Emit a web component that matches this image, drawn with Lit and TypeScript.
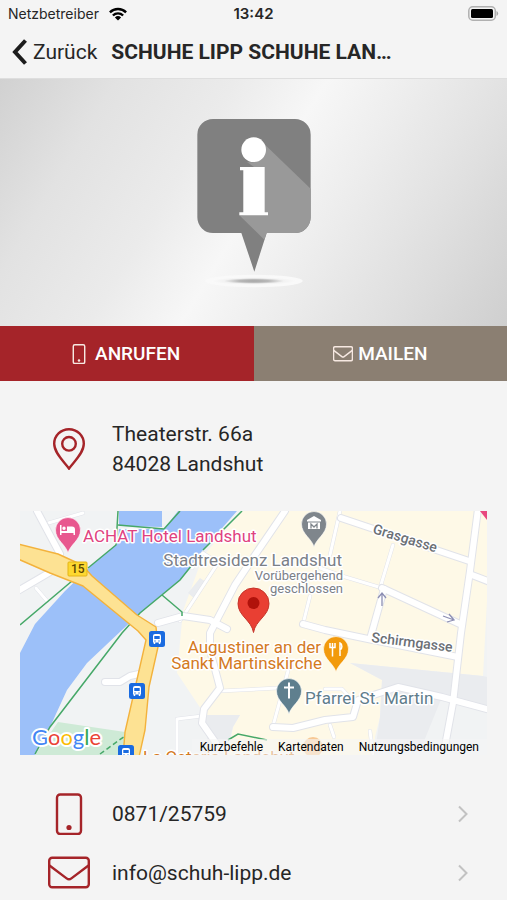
import { LitElement, html, css, svg } from "lit";
import { customElement } from "lit/decorators.js";

const phoneIcon = html`<svg class="icon" viewBox="0 0 42 42" aria-hidden="true">
  <rect x="9" y="1.5" width="24" height="39.5" rx="3.2" />
  <circle class="dot" cx="21" cy="34.5" r="2.6" />
</svg>`;

const mailIcon = html`<svg class="icon" viewBox="0 0 42 42" aria-hidden="true">
  <rect x="1.2" y="5.8" width="39.6" height="29.4" rx="3" />
  <path d="M1.5 13.5L18.6 26.400a4 4 0 0 0 4.800 0L40.5 13.5" />
</svg>`;

const pinIcon = html`<svg class="icon" viewBox="0 0 42 42" aria-hidden="true">
  <path d="M21 40.6C17 34.5 6.2 25.5 6.2 15.8a14.8 14.6 0 0 1 29.6 0C35.8 25.5 25 34.5 21 40.6Z" />
  <circle cx="21" cy="15.8" r="6.8" />
</svg>`;

@customElement("street-map")
export class StreetMap extends LitElement {
  static styles = css`
    :host {
      display: block;
      position: relative;
      overflow: hidden;
      background: #f1f3f4;
    }
    .canvas {
      display: block;
      width: 100%;
      height: auto;
      font-family: Roboto, sans-serif;
    }
    .river { fill: #9cc0f9; }
    .town { fill: #fef9e7; }
    .block { fill: #eaecef; }
    .park { fill: #ceead6; }
    .trail { fill: none; stroke: #46a868; stroke-width: 1.5; }
    .dashed { stroke-dasharray: 5 3; }
    .edge, .road { fill: none; stroke-linejoin: round; stroke-linecap: round; }
    .edge { stroke: #e1e3e9; }
    .road { stroke: #ffffff; }
    .wide .edge { stroke-width: 8; }
    .wide .road { stroke-width: 6; }
    .thin .edge { stroke-width: 4; }
    .thin .road { stroke-width: 3; }
    .highway { fill: #fde293; stroke: #f3b23c; stroke-width: 1.4; stroke-linejoin: round; }
    .arrow { fill: none; stroke: #8d8fb3; stroke-width: 1.3; }
    .shield { fill: #fdd831; stroke: #e4b416; }
    .label {
      font-size: 17px;
      paint-order: stroke;
      stroke: #ffffff;
      stroke-width: 3px;
      stroke-linejoin: round;
    }
    .small { font-size: 13px; }
    .street { font-size: 14px; font-weight: 500; fill: #6b6f75; }
    .num { font-size: 12px; font-weight: 500; fill: #5b4500; }
    .hotel { fill: #e0427f; }
    .museum { fill: #7b8087; }
    .food { fill: #d47a1f; }
    .church { fill: #5f7d8c; }
    .end { text-anchor: end; }
    .brand { font-family: Lato, sans-serif; font-size: 22px; stroke-width: 4px; }
    .g-blue { fill: #4285f4; }
    .g-red { fill: #ea4335; }
    .g-yellow { fill: #fbbc05; }
    .g-green { fill: #34a853; }
    .legal {
      position: absolute;
      right: 0;
      bottom: 0;
      display: flex;
      gap: 15px;
      padding: 1px 8px;
      background: rgba(245, 245, 245, 0.6);
      font: 12px/14px Roboto, sans-serif;
    }
    .legal button, .legal a, .legal span {
      padding: 0;
      border: 0;
      background: none;
      font: inherit;
      color: #000000;
      text-decoration: none;
    }
  `;

  private roads(kind: string, paths: string[]) {
    return svg`<g class=${kind}>
      ${paths.map((d) => svg`<path class="edge" d=${d} />`)}
      ${paths.map((d) => svg`<path class="road" d=${d} />`)}
    </g>`;
  }

  private bus(x: number, y: number) {
    return svg`<g transform="translate(${x} ${y})">
      <rect width="16" height="16" rx="2.5" fill="#1a6be0" />
      <path fill="#fff" d="M4 5a2 2 0 0 1 2-2h4a2 2 0 0 1 2 2v6.5h-.7V13H9.800v-1.500H6.200V13H4.700v-1.500H4Z" />
      <path fill="#1a6be0" d="M5.300 5h5.400v3H5.300ZM5.300 9.400h1.400v1H5.300ZM9.300 9.400h1.400v1H9.300Z" />
    </g>`;
  }

  private pin(x: number, y: number, color: string, glyph: unknown) {
    return svg`<g transform="translate(${x} ${y})">
      <path fill=${color} stroke="#fff" stroke-width=".6"
        d="M0 0C-1.800-8-12.500-13-12.500-23a12.500 12.500 0 0 1 25 0C12.500-13 1.800-8 0 0Z" />
      ${glyph}
    </g>`;
  }

  render() {
    return html`
      <svg class="canvas" viewBox="0 0 467 244" role="img" aria-label="Karte Landshut">
        <path class="river" d="M104 0H142V16L99 15V0ZM158 0L144 18H99L97 33 72 54 45 80 15 113 0 142V244H15L30 216 47 179 67 152 102 119 118 104 140 85 160 69 170 57 183 39 217 0Z" />
        <path class="town" d="M222 0H467V90L463 165 330 152 362 169 360 206 355 226V244H208L213 216 220 204H185L157 162 163 100 183 45Z" />
        <path class="block" d="M330 152L463 165 467 166V196L422 186 400 240H355L360 206 362 169ZM168 82l12-15 6 4-10 18zM185 204h35l-7 12-5 18h-20z" />
        <path class="park" d="M38 211L105 221 104 244H15Z" />
        ${this.roads("thin", [
          "M25 13L63 2",
          "M16 77L27 90",
          "M320 0L310 44",
          "M373 34L360 77",
          "M300 57L322 65 362 77",
          "M200 180L258 177",
          "M268 160L253 215",
          "M157 244V208L182 205",
          "M305 178H322L335 192",
          "M350 220L353 244",
          "M172 57L183 42 198 52 160 110",
          "M283 113L290 85",
          "M310 214L314 226",
        ])}
        ${this.roads("wide", [
          "M17 0L40 43",
          "M-4 81L32 60",
          "M138 112L163 105 190 109 207 118",
          "M265 0L235 44 215 74 190 122 190 139 200 177 184 198 182 212 196 232",
          "M321 7L449 50",
          "M452 64L470 71",
          "M458-2L450 60 441 122 433 192 425 235",
          "M362 77L442 114",
          "M364 78L350 128",
          "M283 113L305 119 348 128 438 146",
          "M253 216L273 217 305 209 333 206 338 189 378 176 422 186 470 199",
          "M85 171H100L110 165 119 163",
        ])}
        <path class="trail" d="M0 114L52 70M68 57L96 34 98 0M98 14L144 18 160 0M15 243L30 216 102 122 120 102 160 69 172 54M183 39L222 0M142 84L162 101V105M208 229L218 223 247 229" />
        <path class="trail dashed" d="M80 243L105 225" />
        <path class="highway" d="M-2 33L38 43 62 54 72 65 117 104 136 116 138 136 129 176 125 219 119 246H103L105 221 126 129 118 120 63 75 30 62-2 48Z" />
        <path class="arrow" d="M362 95V82M358 87l4-5 4 5M423 105l11 4M429 103l5 6-7 2" />

        <rect class="shield" x="48" y="51" width="19" height="14" rx="1" />
        <text class="num" x="51" y="62">15</text>
        ${this.bus(129, 120)} ${this.bus(109, 172)} ${this.bus(98, 234)}

        ${this.pin(48, 42, "#e8588f", svg`<path fill="#fff" d="M-8-28h1.500v6H-1v-4.500h5a3 3 0 0 1 3 3V-18H5.500v-2h-12v2H-8ZM-4-26.500a1.700 1.700 0 1 1 0 3.400 1.700 1.700 0 0 1 0-3.400Z" />`)}
        ${this.pin(294, 36, "#7f868c", svg`<path fill="#fff" d="M0-31L7-27v1.500H-7V-27ZM-6-24.500H6V-18H-6Z" /><path stroke="#7f868c" fill="none" stroke-width="1.300" d="M-3-18.500v-4.500l3 3 3-3v4.500" />`)}
        ${this.pin(269, 203, "#5f7f8e", svg`<path stroke="#fff" fill="none" stroke-width="2" d="M0-31.500v16M-5-26.500H5" />`)}
        ${this.pin(316, 161, "#f29a0c", svg`<path fill="none" stroke="#fff" stroke-width="1.500" d="M-6-29v4.500h5V-29M-3.500-29v13.500M4-16v-13c2.500 1 2.500 6 0 7" />`)}
        <circle cx="293" cy="236" r="10" fill="#f7c894" />
        <path fill="#e8487f" d="M460 0h7v9Z" />
        <path fill="#e93f33" stroke="#c5352b" d="M233.500 121.500C231.500 109 218 105 218 92.500a15.500 15.500 0 0 1 31 0C249 105 235.500 109 233.500 121.500Z" />
        <circle cx="233.500" cy="92" r="6" fill="#b0120b" />

        <text class="label hotel" x="63" y="31">ACHAT Hotel Landshut</text>
        <text class="label museum end" x="322" y="55">Stadtresidenz Landshut</text>
        <text class="label museum small end" x="323" y="69">Vorübergehend</text>
        <text class="label museum small end" x="323" y="82">geschlossen</text>
        <text class="label food end" x="301" y="142">Augustiner an der</text>
        <text class="label food end" x="302" y="158">Sankt Martinskirche</text>
        <text class="label church" x="285" y="193">Pfarrei St. Martin</text>
        <text class="label food" x="123" y="252">La Osteria Landshut</text>
        <text class="label street" transform="translate(352 22) rotate(17)">Grasgasse</text>
        <text class="label street" transform="translate(351 131) rotate(7)">Schirmgasse</text>
        <text class="label brand" x="12" y="234"><tspan class="g-blue">G</tspan><tspan class="g-red">o</tspan><tspan class="g-yellow">o</tspan><tspan class="g-blue">g</tspan><tspan class="g-green">l</tspan><tspan class="g-red">e</tspan></text>
      </svg>
      <div class="legal">
        <button type="button">Kurzbefehle</button>
        <span>Kartendaten</span>
        <a href="#terms">Nutzungsbedingungen</a>
      </div>
    `;
  }
}

@customElement("app-root")
export class AppRoot extends LitElement {
  static styles = css`
    :host {
      display: block;
      min-height: 100vh;
      background: #f4f4f4;
      color: #262626;
      font: 21px/30px Roboto, sans-serif;
    }
    .status {
      display: grid;
      grid-template-columns: 1fr auto 1fr;
      align-items: center;
      height: 27px;
      padding: 0 8px;
      font: 14px/20px Inter, sans-serif;
    }
    .carrier { display: flex; align-items: center; gap: 10px; }
    .wifi { width: 18px; height: 14px; }
    .time { font-size: 15px; font-weight: 600; }
    .battery { justify-self: end; width: 31px; height: 15px; }
    .nav {
      display: flex;
      align-items: center;
      gap: 14px;
      height: 49px;
      padding: 0 12px 2px;
      border-bottom: 1px solid #dedede;
    }
    .back {
      display: flex;
      align-items: center;
      gap: 6px;
      padding: 0;
      border: 0;
      background: none;
      color: inherit;
      font: inherit;
    }
    .chevron { width: 15px; height: 26px; fill: none; stroke: #1c1c1c; stroke-width: 4; }
    .title { margin: 0; font-size: 21px; font-weight: 700; white-space: nowrap; }
    .hero {
      display: flex;
      justify-content: center;
      align-items: center;
      height: 247px;
      background: linear-gradient(121deg, #d1d1d1 0%, #e2e2e2 18%, #ebebeb 36%, #f7f7f7 50%, #ebebeb 66%, #e0e0e0 80%, #cfcfcf 100%);
    }
    .emblem { width: 150px; height: 200px; }
    .actions { display: grid; grid-template-columns: 1fr 1fr; }
    .action {
      display: flex;
      justify-content: center;
      align-items: center;
      gap: 5px;
      height: 55px;
      color: #ffffff;
      font-size: 19px;
      font-weight: 500;
      text-decoration: none;
    }
    .call { background: #a52429; }
    .mail { background: #8b7f72; }
    .action .icon { width: 20px; height: 20px; stroke: #f7e9e2; stroke-width: 3; }
    .call .icon { margin: 0 -4px; }
    .action .dot { fill: #f7e9e2; }
    .icon { width: 42px; height: 42px; fill: none; stroke: #a52429; stroke-width: 2.4; flex: none; }
    .dot { fill: #a52429; stroke: none; }
    .row {
      display: flex;
      align-items: center;
      gap: 22px;
      padding: 0 38px 0 48px;
      color: inherit;
      text-decoration: none;
    }
    .address { padding-top: 38px; padding-bottom: 32px; font-style: normal; }
    .map { margin: 0 20px; }
    .contacts { display: grid; gap: 5px; padding-top: 32px; }
    .contact { height: 54px; }
    .value { flex: 1; }
    .go { width: 12px; height: 18px; fill: none; stroke: #c2c2c2; stroke-width: 2; }
  `;

  private contacts = [
    { icon: phoneIcon, text: "0871/25759", href: "tel:087125759" },
    { icon: mailIcon, text: "info@schuh-lipp.de", href: "mailto:info@schuh-lipp.de" },
  ];

  render() {
    return html`
      <div class="status">
        <span class="carrier">Netzbetreiber
          <svg class="wifi" viewBox="0 0 18 14" aria-hidden="true">
            <path fill="none" stroke="#000" stroke-width="2.4" d="M.9 5.300a11.500 11.500 0 0 1 16.200 0M3.900 8.500a7.300 7.300 0 0 1 10.200 0" />
            <path d="M9 13.400L5.900 10.500a4.500 4.500 0 0 1 6.200 0Z" />
          </svg>
        </span>
        <span class="time">13:42</span>
        <svg class="battery" viewBox="0 0 31 15" aria-hidden="true">
          <rect x=".8" y=".8" width="26.500" height="13.400" rx="4" fill="none" stroke="#b0b0b0" stroke-width="1.500" />
          <rect x="3" y="3" width="22" height="9" rx="1.500" />
          <path fill="#a8a8a8" d="M28.500 5a2.700 2.700 0 0 1 0 5Z" />
        </svg>
      </div>
      <header class="nav">
        <button class="back" type="button">
          <svg class="chevron" viewBox="0 0 15 26" aria-hidden="true"><path d="M13.500 1.500L3 13l10.500 11.500" /></svg>
          Zurück
        </button>
        <h1 class="title">SCHUHE LIPP SCHUHE LAN…</h1>
      </header>
      <div class="hero">
        <svg class="emblem" viewBox="-3 8 450 600" role="img" aria-label="Information">
          <defs>
            <radialGradient id="shade">
              <stop offset="0" stop-color="#a6a6a6" />
              <stop offset=".35" stop-color="#b8b8b8" />
              <stop offset=".7" stop-color="#f2f2f2" />
              <stop offset="1" stop-color="#fafafa" />
            </radialGradient>
          </defs>
          <ellipse cx="222" cy="542" rx="146" ry="19" fill="#f9f9f9" />
          <ellipse cx="222" cy="542" rx="128" ry="12" fill="url(#shade)" />
          <path fill="#808080" d="M99 56H345a47 47 0 0 1 47 47V351a47 47 0 0 1-47 47H260L223 514 184 398H99a47 47 0 0 1-47-47V103a47 47 0 0 1 47-47Z" />
          <path fill="#999" d="M255 133L392 265V351a47 47 0 0 1-47 47H260L253 418 178 345H190V186H220Z" />
          <path fill="#808080" d="M180 170L222 200H180Z" />
          <circle cx="221" cy="148" r="37" fill="#fff" />
          <path fill="#fff" d="M180 200H254V336H264V345H178V336H190V210H180Z" />
        </svg>
      </div>
      <nav class="actions">
        <a class="action call" href="tel:087125759">${phoneIcon}<span>&nbsp;ANRUFEN</span></a>
        <a class="action mail" href="mailto:info@schuh-lipp.de">${mailIcon}<span>MAILEN</span></a>
      </nav>
      <address class="row address">
        ${pinIcon}
        <span>Theaterstr. 66a<br />84028 Landshut</span>
      </address>
      <street-map class="map"></street-map>
      <div class="contacts">
        ${this.contacts.map(
          (c) => html`<a class="row contact" href=${c.href}>
            ${c.icon}<span class="value">${c.text}</span>
            <svg class="go" viewBox="0 0 12 18" aria-hidden="true"><path d="M2 1.500L9.500 9 2 16.500" /></svg>
          </a>`,
        )}
      </div>
    `;
  }
}
